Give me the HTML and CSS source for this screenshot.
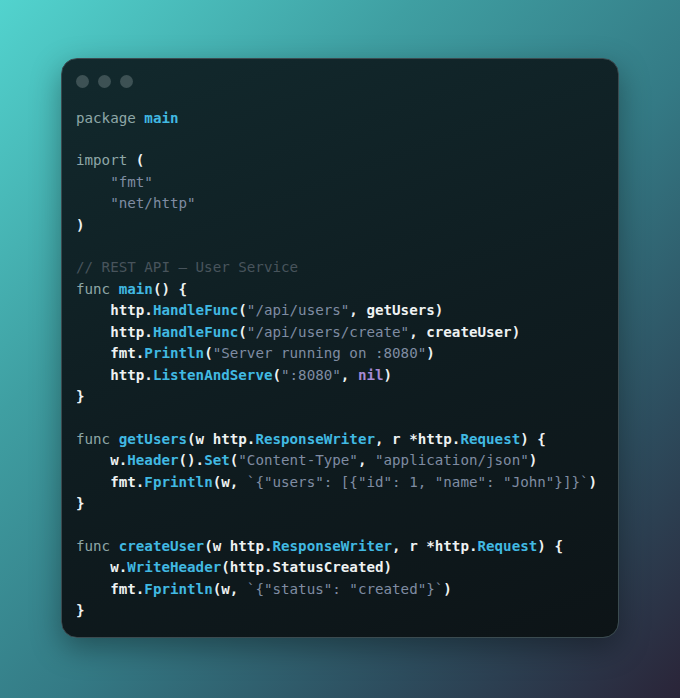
FILE: index.html
```html
<!DOCTYPE html>
<html>
<head>
<meta charset="utf-8">
<link rel="stylesheet" href="styles.css">
</head>
<body>
<div class="card">
  <div class="dots"><span></span><span></span><span></span></div>
<pre class="code"><span class="k">package</span> <span class="f">main</span>

<span class="k">import</span> <span class="p">(</span>
    <span class="s">"fmt"</span>
    <span class="s">"net/http"</span>
<span class="p">)</span>

<span class="c">// REST API — User Service</span>
<span class="k">func</span> <span class="f">main</span><span class="p">() {</span>
    <span class="p">http.</span><span class="f">HandleFunc</span><span class="p">(</span><span class="s">"/api/users"</span><span class="p">, getUsers)</span>
    <span class="p">http.</span><span class="f">HandleFunc</span><span class="p">(</span><span class="s">"/api/users/create"</span><span class="p">, createUser)</span>
    <span class="p">fmt.</span><span class="f">Println</span><span class="p">(</span><span class="s">"Server running on :8080"</span><span class="p">)</span>
    <span class="p">http.</span><span class="f">ListenAndServe</span><span class="p">(</span><span class="s">":8080"</span><span class="p">, </span><span class="n">nil</span><span class="p">)</span>
<span class="p">}</span>

<span class="k">func</span> <span class="f">getUsers</span><span class="p">(w http.</span><span class="f">ResponseWriter</span><span class="p">, r *http.</span><span class="f">Request</span><span class="p">) {</span>
    <span class="p">w.</span><span class="f">Header</span><span class="p">().</span><span class="f">Set</span><span class="p">(</span><span class="s">"Content-Type"</span><span class="p">, </span><span class="s">"application/json"</span><span class="p">)</span>
    <span class="p">fmt.</span><span class="f">Fprintln</span><span class="p">(w, </span><span class="s">`{"users": [{"id": 1, "name": "John"}]}`</span><span class="p">)</span>
<span class="p">}</span>

<span class="k">func</span> <span class="f">createUser</span><span class="p">(w http.</span><span class="f">ResponseWriter</span><span class="p">, r *http.</span><span class="f">Request</span><span class="p">) {</span>
    <span class="p">w.</span><span class="f">WriteHeader</span><span class="p">(http.StatusCreated)</span>
    <span class="p">fmt.</span><span class="f">Fprintln</span><span class="p">(w, </span><span class="s">`{"status": "created"}`</span><span class="p">)</span>
<span class="p">}</span></pre>
</div>
</body>
</html>
```

FILE: styles.css
```css
html, body {
  margin: 0;
  padding: 0;
}
body {
  width: 680px;
  height: 698px;
  display: flex;
  align-items: center;
  justify-content: center;
  background: linear-gradient(135deg, #52d3ce 0%, #3f9fa2 30%, #347a85 55%, #2d4d5e 78%, #2a2438 100%);
  overflow: hidden;
}
.card {
  width: 558px;
  box-sizing: border-box;
  margin-top: -2px;
  padding: 16px 14px 16px 14px;
  border-radius: 16px;
  background: linear-gradient(160deg, #12292d 0%, #0f1d21 50%, #0d1417 100%);
  border: 1px solid #3b4b50;
  box-shadow: 0 10px 30px rgba(0, 0, 0, 0.35);
  display: flex;
  flex-direction: column;
  gap: 20px;
}
.dots {
  display: flex;
  gap: 9px;
}
.dots span {
  width: 13px;
  height: 13px;
  border-radius: 50%;
  background: #3d5154;
}
.code {
  margin: 0;
  font-family: "DejaVu Sans Mono", "Liberation Mono", monospace;
  font-size: 14.2px;
  line-height: 21.4px;
  color: #eef2f2;
  font-weight: bold;
  white-space: pre;
}
.k { color: #8ea7a7; font-weight: normal; }
.f { color: #41b9e2; }
.s { color: #7f8ca2; font-weight: normal; }
.c { color: #48545c; font-weight: normal; }
.n { color: #a68ad6; }
.p { color: #eef2f2; }
```
